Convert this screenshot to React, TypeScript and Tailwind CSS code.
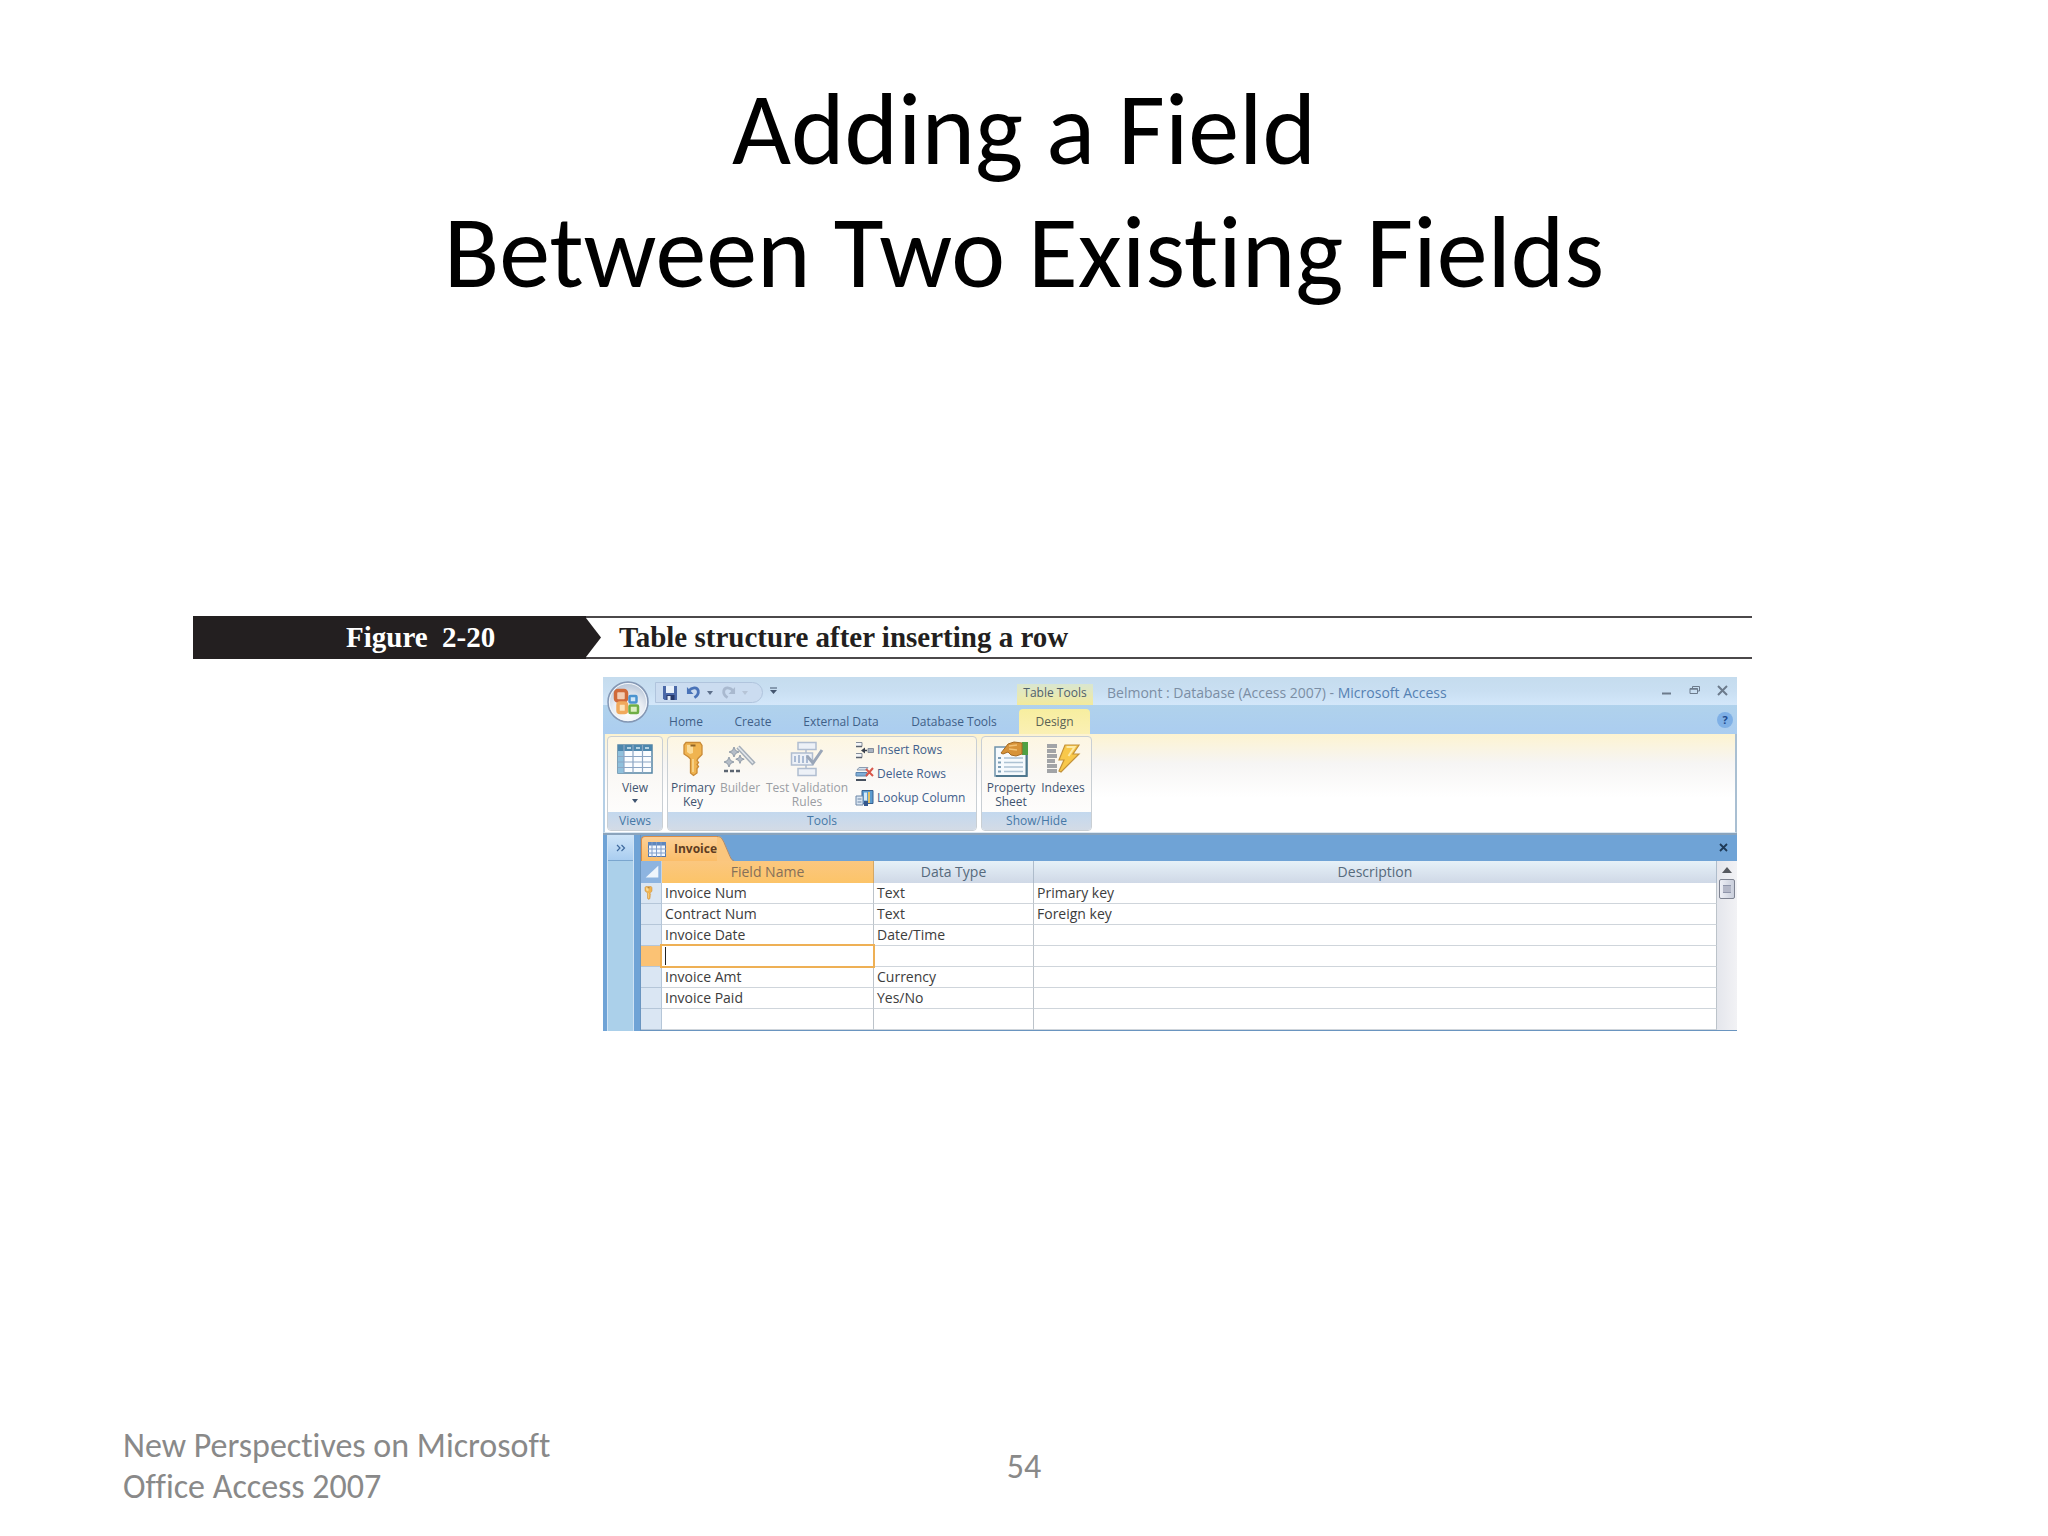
import type { ReactNode } from "react";

const tabs = [
  { name: "Home", width: "w-[66px]" },
  { name: "Create", width: "w-[68px]" },
  { name: "External Data", width: "w-[108px]" },
  { name: "Database Tools", width: "w-[118px]" },
];

const rows = [
  { id: 1, field: "Invoice Num", type: "Text", description: "Primary key", key: true },
  { id: 2, field: "Contract Num", type: "Text", description: "Foreign key" },
  { id: 3, field: "Invoice Date", type: "Date/Time", description: "" },
  { id: 4, field: "", type: "", description: "", active: true },
  { id: 5, field: "Invoice Amt", type: "Currency", description: "" },
  { id: 6, field: "Invoice Paid", type: "Yes/No", description: "" },
  { id: 7, field: "", type: "", description: "" },
];

function OfficeLogo() {
  return (
    <svg viewBox="0 0 42 42" className="size-[42px]">
      <defs>
        <radialGradient id="orb" cx="50%" cy="75%" r="70%">
          <stop offset="0" stopColor="#ffffff" />
          <stop offset="0.55" stopColor="#e9edf3" />
          <stop offset="1" stopColor="#b9c6d8" />
        </radialGradient>
      </defs>
      <circle cx="21" cy="21" r="20" fill="url(#orb)" stroke="#8497b4" strokeWidth="1.5" />
      <circle cx="21" cy="21" r="18.5" fill="none" stroke="#f4f8fc" strokeWidth="1" />
      <rect x="8.5" y="9.5" width="11" height="10.5" rx="2.5" fill="#f3cdb4" stroke="#d06a3a" strokeWidth="3.5" />
      <rect x="22.5" y="15" width="7" height="6.500" rx="1" fill="#cfe6f8" stroke="#4b93cf" strokeWidth="2.500" />
      <rect x="11" y="22" width="8.500" height="9.500" rx="2" fill="#fbe3b8" stroke="#f0a95c" strokeWidth="3.500" />
      <rect x="22.5" y="24.500" width="8.500" height="7.500" rx="1" fill="#dcefc0" stroke="#6fae45" strokeWidth="2.500" />
    </svg>
  );
}

function SaveIcon() {
  return (
    <svg viewBox="0 0 16 16" className="size-4">
      <path d="M1 1h14v14H2.500L1 13.500z" fill="#4a68a8" />
      <path d="M4 1h8v7H4z" fill="#e8f0fa" />
      <path d="M4.500 10h8v5h-8z" fill="#26386b" />
      <path d="M5.500 11h3v4h-3z" fill="#dfe8f5" />
    </svg>
  );
}

function UndoIcon({ stroke }: { stroke: string }) {
  return (
    <svg viewBox="0 0 16 16" className="size-[15px]">
      <path d="M3 6C6 2.500 12 1.500 13 6c.6 3-1.500 6-4 7.500" fill="none" stroke={stroke} strokeWidth="3" />
      <path d="M1 2v7.500h7z" fill={stroke} />
    </svg>
  );
}

function Caret({ className }: { className?: string }) {
  return (
    <svg viewBox="0 0 6 4" className={`h-[4px] w-[6px] ${className ?? ""}`}>
      <path d="M0 0h6L3 4z" fill="currentColor" />
    </svg>
  );
}

function DatasheetIcon() {
  return (
    <svg viewBox="0 0 36 30" className="h-[30px] w-9">
      <rect x="1" y="1" width="34" height="28" fill="#fbfdff" stroke="#5585a5" strokeWidth="1.500" />
      <path d="M1 1h34v6H1z" fill="#4d87ad" />
      <path d="M1 7h6v22H1z" fill="#8fc0dc" />
      <path d="M7 1v28M16 1v28M25.500 1v28M1 12.500h34M1 18h34M1 23.500h34" stroke="#8ca6c4" strokeWidth="1.200" />
      <path d="M10 4h4M19 4h4M28 4h4" stroke="#d7ebf5" strokeWidth="1.500" />
    </svg>
  );
}

function KeyIcon({ className }: { className: string }) {
  return (
    <svg viewBox="0 0 20 36" className={className}>
      <path
        d="M3 1.500h14l2 3v9l-4 4-1 2 1.500 2-1.500 2 1.500 2-1.500 2v4.500L10.500 34.500 7.500 32V18l-2-2L1 13V4z"
        fill="#f0b450"
        stroke="#c98a35"
        strokeWidth="1.300"
      />
      <path d="M4 4h6v8l-3 1-3-2z" fill="#fbdb97" />
      <path d="M7.500 4.500h5" stroke="#8f6426" strokeWidth="2" />
      <path d="M10 18v13" stroke="#fadb98" strokeWidth="1.500" />
    </svg>
  );
}

function BuilderIcon() {
  return (
    <svg viewBox="0 0 34 32" className="h-8 w-[34px]">
      <path d="M15 4l16 17" stroke="#a5aeb8" strokeWidth="4.500" />
      <path d="M15 4l15 16" stroke="#e3e7eb" strokeWidth="1.600" />
      <path
        d="M11 4l1.500 3.500L16 9l-3.500 1.500L11 14l-1.500-3.500L6 9l3.500-1.500zM17 12l1.200 3 3 1.200-3 1.200-1.200 3-1.200-3-3-1.200 3-1.200zM6 14l1.500 3.500L11 19l-3.500 1.500L6 24l-1.500-3.500L1 19l3.500-1.500z"
        fill="#b5bdc7"
        stroke="#929ca9"
        strokeWidth="1"
      />
      <path d="M1 28h4M7 28h4M13 28h4" stroke="#5c6571" strokeWidth="2.500" />
    </svg>
  );
}

function ValidationIcon() {
  return (
    <svg viewBox="0 0 34 36" className="h-9 w-[34px]">
      <g fill="#edf1f7" stroke="#b0bdd0" strokeWidth="1.500">
        <rect x="8" y="1.500" width="18" height="7" />
        <rect x="8" y="27.500" width="18" height="7" />
        <path d="M16 8.500v4M16 24v3" />
        <rect x="1.500" y="12" width="21" height="12" />
      </g>
      <path d="M5 15v6M9 14v8M13 15v7M17 14v8" stroke="#a3b5d0" strokeWidth="1.800" />
      <path d="M17 15l6 7L32 9" fill="none" stroke="#9aa6b8" strokeWidth="3" />
    </svg>
  );
}

function InsertRowsIcon() {
  return (
    <svg viewBox="0 0 19 18" className="h-[18px] w-[19px]">
      <g fill="#f4f6f9" stroke="#858d99">
        <path d="M1 1.500h6v4H1M1 12.500h6v4H1" />
        <path d="M13 7.500h5.500v4H13z" fill="#a9b3c1" />
      </g>
      <path d="M1 5.500h6M1 16.500h6" stroke="#59616d" strokeWidth="1.500" />
      <path d="M12 9.500H9" stroke="#39414e" strokeWidth="1.500" />
      <path d="M6 9.500l4-3v6z" fill="#39414e" />
    </svg>
  );
}

function DeleteRowsIcon() {
  return (
    <svg viewBox="0 0 19 18" className="h-[18px] w-[19px]">
      <path d="M4 2.500h9l-2 2.500H2z" fill="#d7e1ec" stroke="#8b9bb0" />
      <path d="M1 7.500h11v3.500H1z" fill="#7fadd6" stroke="#5a83ad" />
      <path d="M1 15h10" stroke="#47515f" strokeWidth="2" />
      <path d="M11 4l7 7M18 3l-7 8" stroke="#d8574a" strokeWidth="2" />
    </svg>
  );
}

function LookupIcon() {
  return (
    <svg viewBox="0 0 19 18" className="h-[18px] w-[19px]">
      <path d="M7 1.500h11v13H7z" fill="#5b9bd0" stroke="#39618f" />
      <path d="M9 3.500h3v8H9z" fill="#d4e9f8" />
      <path d="M14 3v11" stroke="#e4c266" strokeWidth="2" />
      <path d="M1 7h7v9H1z" fill="#dbe7f3" stroke="#6c86a6" />
      <path d="M2.500 10h4M2.500 13h4" stroke="#6c86a6" />
      <path d="M9 12h4v5H9z" fill="#35588e" />
    </svg>
  );
}

function PropertySheetIcon() {
  return (
    <svg viewBox="0 0 36 36" className="size-9">
      <path d="M2 6h32v29H2z" fill="#f6fafd" stroke="#6f93aa" strokeWidth="1.500" />
      <path d="M33.500 14v21H3" fill="none" stroke="#50788f" strokeWidth="2" />
      <path d="M5 17h3M5 21.500h3M5 26h3M5 30.500h3" stroke="#7d9db5" strokeWidth="2" />
      <path d="M11 17h19M11 21.500h19M11 26h19M11 30.500h19" stroke="#adc2d3" strokeWidth="1.500" />
      <path d="M29 1h6v13h-6z" fill="#4fa044" />
      <path d="M8 12l7-9 6-2 8 1v11l-6 2-5-1-3-3-5 2z" fill="#d79338" stroke="#a56a22" />
      <path d="M16 5l8-1M16 8l8 1" stroke="#f2c274" strokeWidth="1.500" />
    </svg>
  );
}

function IndexesIcon() {
  return (
    <svg viewBox="0 0 36 32" className="h-8 w-9">
      <path d="M2 3h10M2 8h9M2 13h10M2 18h8M2 23h10M2 28h10" stroke="#a2a4a7" strokeWidth="3.800" />
      <path d="M20 2h14l-6 9h6L16 29l-2-1 5-11h-5z" fill="#f8c84a" stroke="#c3923a" strokeWidth="1.200" />
      <path d="M21.500 4h8l-6 9" fill="none" stroke="#fdeaa6" strokeWidth="2" />
    </svg>
  );
}

function GridIcon() {
  return (
    <svg viewBox="0 0 18 15" className="h-[15px] w-[18px]">
      <rect x="0.500" y="0.500" width="17" height="14" fill="#f3f8fe" stroke="#5578ac" />
      <path d="M0 0h18v3.500H0z" fill="#5d86bd" />
      <path d="M4 0v15M8.500 0v15M13 0v15M0 7h18M0 11h18" stroke="#7f9dca" />
    </svg>
  );
}

function RibbonGroup({ label, width, children }: { label: string; width: string; children: ReactNode }) {
  return (
    <section
      className={`flex flex-col overflow-hidden rounded-sm border border-[#c9cfd4] bg-linear-to-b from-[#fdf6e2] via-[#faf8f5] via-40% to-white ${width}`}
    >
      <div className="flex flex-1">{children}</div>
      <h3 className="h-[18px] bg-linear-to-b from-[#c3d8ee] to-[#d3dbe6] text-center text-xs leading-[18px] text-[#4678a6]">
        {label}
      </h3>
    </section>
  );
}

function LargeButton({
  icon,
  lines,
  width,
  disabled,
}: {
  icon: ReactNode;
  lines: string[];
  width: string;
  disabled?: boolean;
}) {
  return (
    <button
      type="button"
      disabled={disabled}
      className={`flex flex-col items-center text-xs leading-[14px] whitespace-nowrap ${width} ${
        disabled ? "text-[#9a9da3]" : "text-[#3f5470]"
      }`}
    >
      <span className="mt-1 mb-1 flex h-9 items-center">{icon}</span>
      {lines.map((line) => (
        <span key={line}>{line}</span>
      ))}
    </button>
  );
}

function SmallButton({ icon, label }: { icon: ReactNode; label: string }) {
  return (
    <button type="button" className="flex h-6 items-center gap-[3px] text-xs whitespace-nowrap text-[#41608c]">
      {icon}
      {label}
    </button>
  );
}

function TitleBar() {
  return (
    <header className="flex h-7 items-start bg-linear-to-b from-[#c5dcee] via-[#c9dff2] to-[#d3e7fa]">
      <div className="mt-[5px] ml-[52px] flex h-[21px] w-[108px] items-center rounded-r-full border border-[#b0c4dd] bg-[#cbdcf0] pl-[6px] text-[#5d6f8a]">
        <button type="button" aria-label="Save">
          <SaveIcon />
        </button>
        <button type="button" aria-label="Undo" className="ml-2 flex items-center gap-[6px]">
          <UndoIcon stroke="#4a73b8" />
          <Caret />
        </button>
        <button type="button" aria-label="Redo" className="ml-2 flex items-center gap-[6px] text-[#b6c4d6]">
          <span className="-scale-x-100">
            <UndoIcon stroke="#a9b9cf" />
          </span>
          <Caret />
        </button>
      </div>
      <button type="button" aria-label="Customize" className="mt-[10px] ml-[7px] text-[#44566f]">
        <svg viewBox="0 0 7 7" className="size-[7px]">
          <path d="M0 1h7" stroke="currentColor" />
          <path d="M0 3h7L3.500 7z" fill="currentColor" />
        </svg>
      </button>
      <div className="flex flex-1 items-start pl-[240px]">
        <span className="mt-[7px] h-[21px] w-[76px] shrink-0 bg-linear-to-b from-[#d9e6cf] to-[#f3ea9c] text-center text-xs leading-[18px] whitespace-nowrap text-[#50606a]">
          Table Tools
        </span>
        <h2 className="mt-[5px] ml-[14px] flex-1 text-sm leading-[22px] whitespace-nowrap text-[#7b8ea4]">
          Belmont : Database (Access 2007) - <span className="text-[#5581b3]">Microsoft Access</span>
        </h2>
        <div className="mt-[8px] mr-[9px] flex gap-[17px] text-[#6c7b8c]">
          <button type="button" aria-label="Minimize">
            <svg viewBox="0 0 11 11" className="size-[11px]">
              <path d="M1 8.500h9" stroke="currentColor" strokeWidth="2" />
            </svg>
          </button>
          <button type="button" aria-label="Restore">
            <svg viewBox="0 0 11 11" className="size-[11px]" fill="none" stroke="currentColor">
              <path d="M3.500 3V1.500h7V6H9" />
              <path d="M1 3.500h7.500v5H1z" />
              <path d="M1 4h7.500" strokeWidth="1.500" />
            </svg>
          </button>
          <button type="button" aria-label="Close">
            <svg viewBox="0 0 11 11" className="size-[11px]">
              <path d="M1 1l9 9M10 1l-9 9" stroke="currentColor" strokeWidth="2" />
            </svg>
          </button>
        </div>
      </div>
    </header>
  );
}

function Ribbon() {
  return (
    <>
      <nav className="flex h-[29px] items-end bg-linear-to-b from-[#b0d2ec] to-[#abcdf0] pl-[50px] text-xs text-[#3f5f88]">
        {tabs.map((tab) => (
          <button key={tab.name} type="button" className={`h-[25px] leading-[25px] whitespace-nowrap ${tab.width}`}>
            {tab.name}
          </button>
        ))}
        <button
          type="button"
          className="ml-[6px] h-[25px] w-[71px] rounded-t-sm bg-linear-to-b from-[#f7ee9f] to-[#fbf0b4] leading-[25px] text-[#5a6255]"
        >
          Design
        </button>
        <button
          type="button"
          aria-label="Help"
          className="mr-1 mb-[6px] ml-auto flex size-4 items-center justify-center rounded-full bg-[#7fb0e6] text-[11px] font-bold text-[#214a8b]"
        >
          ?
        </button>
      </nav>
      <div className="flex h-[99px] gap-1 border-x-2 border-b border-l-[#b5cfe6] border-r-[#a9bfd2] border-b-[#dbe8f3] bg-linear-to-b from-[#fdf3d0] via-[#f6f5f4] via-30% to-white to-65% px-[2px] pt-[2px] pb-px">
        <RibbonGroup label="Views" width="w-[56px]">
          <button type="button" className="flex w-full flex-col items-center text-xs leading-[14px] text-[#3f5470]">
            <span className="mt-1 mb-1 flex h-9 items-center">
              <DatasheetIcon />
            </span>
            View
            <Caret className="mt-1" />
          </button>
        </RibbonGroup>
        <RibbonGroup label="Tools" width="w-[310px]">
          <LargeButton icon={<KeyIcon className="h-9 w-5" />} lines={["Primary", "Key"]} width="w-[50px]" />
          <LargeButton icon={<BuilderIcon />} lines={["Builder"]} width="w-[44px]" disabled />
          <LargeButton icon={<ValidationIcon />} lines={["Test Validation", "Rules"]} width="w-[90px]" disabled />
          <div className="ml-[3px] flex flex-col pt-px">
            <SmallButton icon={<InsertRowsIcon />} label="Insert Rows" />
            <SmallButton icon={<DeleteRowsIcon />} label="Delete Rows" />
            <SmallButton icon={<LookupIcon />} label="Lookup Column" />
          </div>
        </RibbonGroup>
        <RibbonGroup label="Show/Hide" width="w-[111px]">
          <LargeButton icon={<PropertySheetIcon />} lines={["Property", "Sheet"]} width="w-[58px]" />
          <LargeButton icon={<IndexesIcon />} lines={["Indexes"]} width="w-[46px]" />
        </RibbonGroup>
      </div>
    </>
  );
}

function FieldTable() {
  return (
    <div className="flex">
      <table className="w-full table-fixed border-separate border-spacing-0 text-sm leading-5 text-[#3c3c3c]">
        <colgroup>
          <col className="w-[21px]" />
          <col className="w-[212px]" />
          <col className="w-[160px]" />
          <col />
        </colgroup>
        <thead>
          <tr className="h-[22px] leading-[22px] text-[#566a7c]">
            <th aria-label="Select all" className="border-r border-[#c5d4e4] bg-[#8db4e0] p-0">
              <svg viewBox="0 0 20 20" className="ml-auto size-[18px]">
                <path d="M17 3v13H3z" fill="#eef5fc" />
              </svg>
            </th>
            <th className="border-r border-[#d4a765] bg-linear-to-b from-[#fbc77f] to-[#fcc468] p-0 font-normal text-[#85705a]">
              Field Name
            </th>
            <th className="border-r border-[#aebccb] bg-linear-to-b from-[#e6f1f8] to-[#cfd8e6] p-0 font-normal">
              Data Type
            </th>
            <th className="border-r border-[#aebccb] bg-linear-to-b from-[#e6f1f8] to-[#cfd8e6] p-0 font-normal">
              Description
            </th>
          </tr>
        </thead>
        <tbody>
          {rows.map((row) => (
            <tr key={row.id} className="h-[21px]">
              <td className={`border-r border-b border-[#b5c6d8] p-0 ${row.active ? "bg-[#fbc274]" : "bg-[#dae6f3]"}`}>
                {row.key && <KeyIcon className="ml-[3px] h-[14px] w-[9px]" />}
              </td>
              <td className="border-r border-b border-[#cfd5db] border-r-[#bcc3ca] p-0">
                {row.active ? (
                  <div className="flex h-5 items-center pl-[3px] outline-2 outline-[#eeb055]">
                    <span className="h-[18px] w-px bg-[#222]" />
                    <input aria-label="Field Name" className="h-4 w-full outline-none" />
                  </div>
                ) : (
                  <span className="block h-5 pl-[3px]">{row.field}</span>
                )}
              </td>
              <td className="border-r border-b border-[#cfd5db] border-r-[#bcc3ca] p-0 pl-[3px]">{row.type}</td>
              <td className="border-r border-b border-[#cfd5db] border-r-[#bcc3ca] p-0 pl-[3px]">{row.description}</td>
            </tr>
          ))}
        </tbody>
      </table>
      <div className="flex w-5 shrink-0 flex-col items-center bg-linear-to-r from-[#e4e6ec] to-[#f2f2f5]">
        <button type="button" aria-label="Scroll up" className="flex h-[18px] items-center">
          <svg viewBox="0 0 10 6" className="h-[6px] w-[10px]">
            <path d="M0 6l5-6 5 6z" fill="#56595f" />
          </svg>
        </button>
        <button
          type="button"
          aria-label="Scroll position"
          className="flex h-5 w-4 items-center justify-center rounded-xs border border-[#7e8391] bg-linear-to-r from-[#eef0f6] to-[#c9cedb]"
        >
          <span className="h-2 w-2 border-y border-[#9096ab] bg-[#b4b8c8]" />
        </button>
      </div>
    </div>
  );
}

function AccessWindow() {
  return (
    <div className="relative bg-[#b0d2ec] font-['Open_Sans','Noto_Sans',sans-serif]">
      <TitleBar />
      <Ribbon />
      <button type="button" aria-label="Office" className="absolute top-[4px] left-1">
        <OfficeLogo />
      </button>
      <div className="flex border-t-2 border-t-[#8ba4bc] bg-[#6fa3d6] pl-1">
        <aside className="mr-[6px] w-[27px] shrink-0 border-x border-[#cfe3f5] bg-[#abd0ea]">
          <button
            type="button"
            aria-label="Open navigation pane"
            className="flex h-[26px] w-full items-center justify-center border-b border-[#7aa6cf] bg-linear-to-b from-[#cfe5f8] to-[#a9cdf0]"
          >
            <svg viewBox="0 0 10 8" className="h-2 w-[10px]" fill="none" stroke="#3f6a9d" strokeWidth="1.200">
              <path d="M1 1l3 3-3 3M5.500 1l3 3-3 3" />
            </svg>
          </button>
        </aside>
        <main className="min-w-0 flex-1 border-b border-l border-[#6a95c0]">
          <div className="flex h-[26px] items-end">
            <a
              href="#invoice"
              className="flex h-[25px] items-center gap-[8px] rounded-tl-sm border-t border-l border-[#d88d49] bg-linear-to-b from-[#fcd096] to-[#fbbd68] pl-[6px] text-xs font-bold text-[#5f3d22]"
            >
              <GridIcon />
              Invoice
            </a>
            <svg viewBox="0 0 17 25" className="h-[25px] w-[17px]">
              <path d="M0 0c4 0 5 2 7 6l6 14c1 3 2 5 4 5H0z" fill="#fbc67d" />
              <path d="M0 .5c4 0 5 2 7 6l6 14c1 2 2 4 4 4" fill="none" stroke="#a98a72" />
            </svg>
            <button type="button" aria-label="Close table" className="mr-[9px] mb-[9px] ml-auto text-[#1f3a57]">
              <svg viewBox="0 0 9 9" className="size-[9px]">
                <path d="M1 1l7 7M8 1l-7 7" stroke="currentColor" strokeWidth="1.800" />
              </svg>
            </button>
          </div>
          <div className="bg-white">
            <FieldTable />
          </div>
        </main>
      </div>
    </div>
  );
}

export default function App() {
  return (
    <div className="flex min-h-screen flex-col bg-white font-[Carlito,Lato,sans-serif] [font-variant-ligatures:none]">
      <h1 className="pt-[68px] text-center text-[102px] leading-[123px] text-black">
        Adding a Field
        <br />
        Between Two Existing Fields
      </h1>

      <figure className="mt-[302px] mr-[296px] ml-[193px]">
        <figcaption className="flex h-[43px] border-y-2 border-[#4b484a] font-['Liberation_Serif',serif] text-[29px] leading-[39px] font-bold whitespace-pre text-[#231f20]">
          <span className="-my-[2px] w-[393px] bg-[#231f20] pl-[153px] leading-[43px] text-white">Figure  2-20</span>
          <svg viewBox="0 0 15 39" className="h-[39px] w-[15px]">
            <path d="M0 0l15 19.500L0 39z" fill="#231f20" />
          </svg>
          <span className="pl-[18px]">Table structure after inserting a row</span>
        </figcaption>
        <div className="mt-[18px] mr-[15px] ml-[410px]">
          <AccessWindow />
        </div>
      </figure>

      <footer className="mt-auto grid grid-cols-3 items-center px-[123px] pb-[29px] text-[34px] leading-[41px] text-[#898989]">
        <p>
          New Perspectives on Microsoft
          <br />
          Office Access 2007
        </p>
        <p className="text-center">54</p>
      </footer>
    </div>
  );
}
